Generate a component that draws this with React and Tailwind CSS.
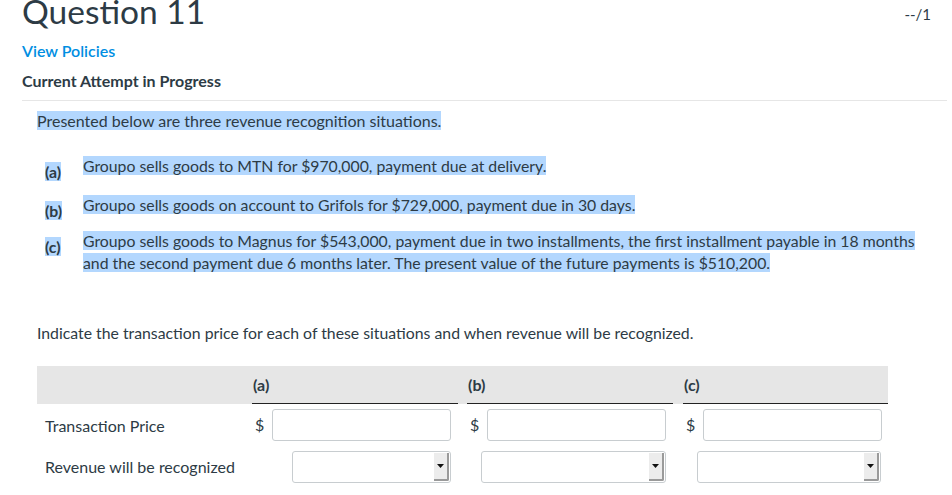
// App.jsx — question page with revenue recognition table

const HL = "bg-[#b3d7fe]"

const items = [
  { label: "(a)", mt: "mt-[23px]", text: "Groupo sells goods to MTN for $970,000, payment due at delivery." },
  { label: "(b)", mt: "mt-[17px]", text: "Groupo sells goods on account to Grifols for $729,000, payment due in 30 days." },
  {
    label: "(c)",
    mt: "mt-[14px]",
    text: "Groupo sells goods to Magnus for $543,000, payment due in two installments, the first installment payable in 18 months and the second payment due 6 months later. The present value of the future payments is $510,200.",
  },
]

function SelectBox({ className }) {
  return (
    <div className={`h-[32px] flex border border-[#c8cdd0] rounded-[3px] bg-white ${className}`}>
      <div className="flex-1" />
      <div className="w-[15px] my-px mr-px flex items-center justify-center bg-[#ececec] border-r-2 border-b-2 border-[#9a9a9a] rounded-br-[2px]">
        <svg width="7" height="4" viewBox="0 0 7 4">
          <polygon points="0,0 7,0 3.5,4" fill="#111" />
        </svg>
      </div>
    </div>
  )
}

function PriceInput() {
  return (
    <div className="flex items-center">
      <span className="w-[20px] pl-[3px] text-[16px]">$</span>
      <div className="w-[179px] h-[32px] border border-[#c8cdd0] rounded-[3px] bg-white" />
    </div>
  )
}

export default function App() {
  return (
    <div className="w-[952px] h-[495px] overflow-hidden bg-white text-[#2d3b45] font-['Lato',sans-serif]">
      <div className="pl-[22px]">
        {/* Header */}
        <div className="flex items-start justify-between pr-[21px]">
          <h1 className="text-[33.5px] leading-[34px] -mt-[6px] font-normal">Question 11</h1>
          <span className="text-[15px] leading-[20px] mt-[4px]">--/1</span>
        </div>
        <div className="mt-[13px] text-[16px] leading-[20px] font-semibold text-[#008ee2]">View Policies</div>
        <div className="mt-[10px] text-[16px] leading-[20px] font-bold">Current Attempt in Progress</div>
        <div className="mt-[9px] mr-[5px] border-t border-[#e6e6e6]" />

        {/* Body */}
        <div className="pl-[15px] text-[16px] leading-[22px]">
          <p className="mt-[9px]">
            <span className={HL}>Presented below are three revenue recognition situations.</span>
          </p>

          {items.map((it) => (
            <div key={it.label} className={`flex text-[15.8px] ${it.mt}`}>
              <div className="w-[46px] h-[22px] pl-[8px] pt-[6px] shrink-0">
                <span className={`${HL} font-bold`}>{it.label}</span>
              </div>
              <p className="w-[850px]">
                <span className={HL}>{it.text}</span>
              </p>
            </div>
          ))}

          <p className="mt-[48px] text-[15.8px]">Indicate the transaction price for each of these situations and when revenue will be recognized.</p>

          {/* Table */}
          <div className="mt-[22px] w-[851px]">
            <div className="flex h-[38px] bg-[#e6e6e6]">
              <div className="w-[215px]" />
              {["(a)", "(b)", "(c)"].map((h, i) => (
                <div
                  key={h}
                  className={`flex items-center pl-px font-bold border-b border-[#222] ${
                    i === 0 ? "w-[206px]" : i === 1 ? "w-[206px] ml-[9px]" : "w-[205px] ml-[10px]"
                  }`}
                >
                  {h}
                </div>
              ))}
            </div>

            <div className="flex items-center h-[32px] mt-[5px]">
              <div className="w-[215px] pl-[8px] pt-[2px]">Transaction Price</div>
              <div className="w-[206px]"><PriceInput /></div>
              <div className="w-[206px] ml-[9px]"><PriceInput /></div>
              <div className="w-[205px] ml-[10px]"><PriceInput /></div>
            </div>

            <div className="flex items-center h-[32px] mt-[10px]">
              <div className="w-[215px] pl-[8px]">Revenue will be recognized</div>
              <div className="w-[206px] pl-[40px]"><SelectBox className="w-[159px]" /></div>
              <div className="w-[206px] ml-[9px] pl-[14px]"><SelectBox className="w-[185px]" /></div>
              <div className="w-[205px] ml-[10px] pl-[14px]"><SelectBox className="w-[184px]" /></div>
            </div>
          </div>
        </div>
      </div>
    </div>
  )
}
